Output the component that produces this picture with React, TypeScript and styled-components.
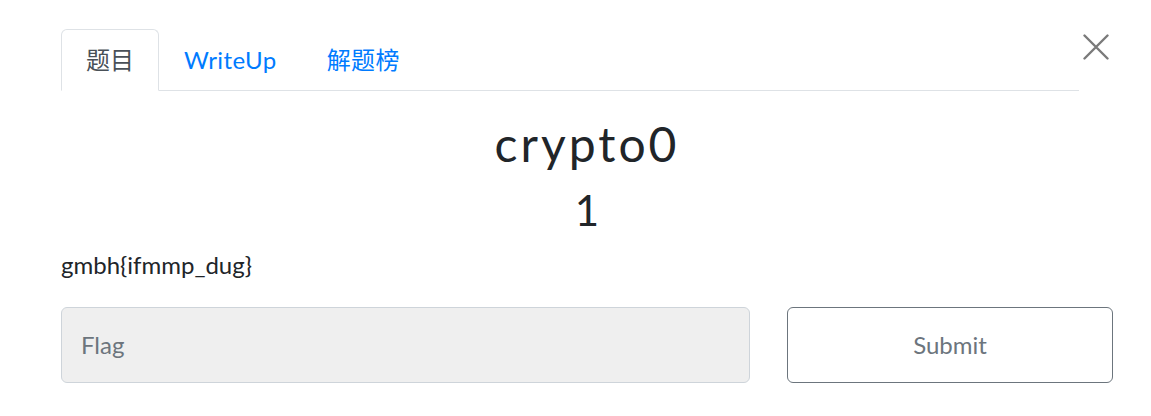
import React from 'react'
import styled, { createGlobalStyle } from 'styled-components'

const GlobalStyle = createGlobalStyle`
  html, body {
    margin: 0;
    padding: 0;
    background: #fff;
  }
  body {
    font-family: Lato, "Noto Sans CJK SC", "Noto Sans", sans-serif;
    font-size: 24px;
    line-height: 1.5;
    color: #212529;
  }
  * { box-sizing: border-box; }
`

function CloseIcon() {
    return (
        <svg width="26" height="26" viewBox="0 0 26 26" fill="none">
            <path d="M1.5 1.5 L24.5 24.5 M24.5 1.5 L1.5 24.5" stroke="#7a7a7a" strokeWidth="2.4" strokeLinecap="round" />
        </svg>
    )
}

function App() {
    const [tab, setTab] = React.useState(0)
    const tabs = ['题目', 'WriteUp', '解题榜']

    return (
        <ModalBody>
            <GlobalStyle />
            <Header>
                <Nav>
                    {tabs.map((t, i) => (
                        <Tab key={t} $active={tab === i} onClick={() => setTab(i)}>
                            {t}
                        </Tab>
                    ))}
                </Nav>
                <Close aria-label="Close">
                    <CloseIcon />
                </Close>
            </Header>

            <Name>crypto0</Name>
            <Value>1</Value>

            <Desc>gmbh{'{'}ifmmp_dug{'}'}</Desc>

            <SubmitRow>
                <FlagInput type="text" placeholder="Flag" />
                <SubmitButton>Submit</SubmitButton>
            </SubmitRow>
        </ModalBody>
    )
}

export default App

export const ModalBody = styled.div`
    padding: 29px 38px 0 61px;
`

export const Header = styled.div`
    display: flex;
    align-items: flex-start;
`

export const Nav = styled.nav`
    flex: 1;
    display: flex;
    border-bottom: 1px solid #dee2e6;
`

export const Tab = styled.button<{ $active?: boolean }>`
    font: inherit;
    line-height: 36px;
    padding: 12px 24px;
    margin-bottom: -1px;
    background: ${p => (p.$active ? '#fff' : 'transparent')};
    cursor: pointer;
    border: 1px solid ${p => (p.$active ? '#dee2e6' : 'transparent')};
    border-bottom-color: ${p => (p.$active ? '#fff' : 'transparent')};
    border-radius: 6px 6px 0 0;
    color: ${p => (p.$active ? '#495057' : '#007bff')};
    letter-spacing: ${p => (p.$active ? '0' : '0.4px')};
`

export const Close = styled.button`
    width: 34px;
    height: 36px;
    margin-top: 0;
    padding: 0;
    border: 0;
    background: transparent;
    display: flex;
    align-items: center;
    justify-content: center;
    cursor: pointer;
`

export const Name = styled.h2`
    margin: 0 0 12px;
    padding-top: 24px;
    text-align: center;
    font-size: 48px;
    font-weight: 400;
    line-height: 1.2;
    letter-spacing: 3px;
`

export const Value = styled.h3`
    margin: 0 0 12px;
    text-align: center;
    font-size: 42px;
    font-weight: 400;
    line-height: 1.2;
`

export const Desc = styled.p`
    margin: 0 0 24px;
    font-size: 24px;
    line-height: 36px;
`

export const SubmitRow = styled.div`
    display: grid;
    grid-template-columns: 689fr 326fr;
    column-gap: 37px;
`

export const FlagInput = styled.input`
    height: 76px;
    padding: 0 19px;
    font: inherit;
    color: #495057;
    background: #efefef;
    border: 1px solid #ced4da;
    border-radius: 6px;
    outline: none;
    &::placeholder {
        color: #6c757d;
    }
`

export const SubmitButton = styled.button`
    height: 76px;
    font: inherit;
    color: #6c757d;
    background: #fff;
    border: 1px solid #6c757d;
    border-radius: 6px;
    cursor: pointer;
`
